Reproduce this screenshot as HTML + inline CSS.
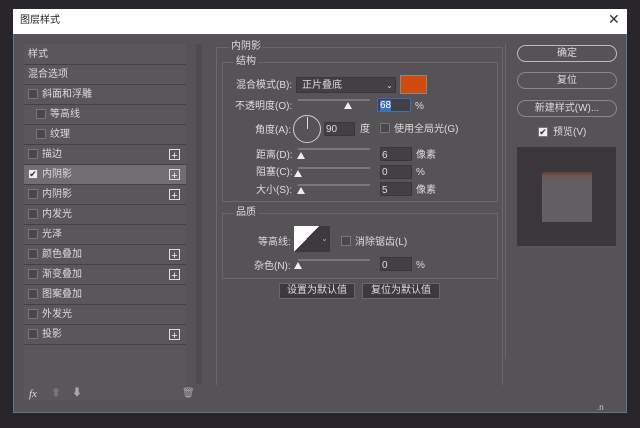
<!DOCTYPE html><html><head><meta charset="utf-8"><style>
body{margin:0;width:640px;height:428px;background:#28262a;position:relative;overflow:hidden;font-family:"Liberation Sans","Noto Sans CJK SC",sans-serif;font-size:10px;color:#ddd}
div,span{position:absolute;box-sizing:border-box}
.t{white-space:nowrap;line-height:12px}
.row{left:24px;width:162px;height:20px;border-bottom:1px solid #444145;background:#5a565b}
.row span{top:4px;line-height:12px}
.cb{width:10px;height:10px;border:1px solid #777;background:#4a474b}
.plus{right:6px;top:4px;width:11px;height:11px;border:1px solid #ddd;color:#eee;font-size:11px;line-height:8px;text-align:center}
.inp{background:#434044;height:14px;border:1px solid #3a373b}
.sl{height:2px;background:#7a777b}
.th{width:0;height:0;border-left:4px solid transparent;border-right:4px solid transparent;border-bottom:7px solid #eee}
.btn{left:517px;width:100px;height:17px;border:1px solid #888;border-radius:9px;text-align:center;line-height:15px;color:#ddd}
</style></head><body>
<div style="left:13px;top:9px;width:614px;height:404px;background:#565257;border:1px solid #5a7896"></div>
<div style="left:13px;top:9px;width:614px;height:25px;background:#fff"></div>
<div class="t" style="left:20px;top:15px;color:#222;font-size:10px">图层样式</div>
<div class="t" style="left:608px;top:13px;color:#333;font-size:14px">✕</div>
<div style="left:24px;top:44px;width:162px;height:356px;background:#5a565b"></div>
<div style="left:196px;top:44px;width:6px;height:340px;background:#4e4b4f"></div>
<div class="row" style="top:45px"><span style="left:4px">样式</span></div>
<div class="row" style="top:65px"><span style="left:4px">混合选项</span></div>
<div class="row" style="top:85px"><span class="cb" style="left:4px;top:4px"></span><span style="left:18px">斜面和浮雕</span></div>
<div class="row" style="top:105px"><span class="cb" style="left:12px;top:4px"></span><span style="left:26px">等高线</span></div>
<div class="row" style="top:125px"><span class="cb" style="left:12px;top:4px"></span><span style="left:26px">纹理</span></div>
<div class="row" style="top:145px"><span class="cb" style="left:4px;top:4px"></span><span style="left:18px">描边</span><span class="plus">+</span></div>
<div class="row" style="top:165px;background:#716d72"><span class="cb" style="left:4px;top:4px;background:#eee;color:#333;font-size:9px;line-height:8px;text-align:center">✔</span><span style="left:18px">内阴影</span><span class="plus">+</span></div>
<div class="row" style="top:185px"><span class="cb" style="left:4px;top:4px"></span><span style="left:18px">内阴影</span><span class="plus">+</span></div>
<div class="row" style="top:205px"><span class="cb" style="left:4px;top:4px"></span><span style="left:18px">内发光</span></div>
<div class="row" style="top:225px"><span class="cb" style="left:4px;top:4px"></span><span style="left:18px">光泽</span></div>
<div class="row" style="top:245px"><span class="cb" style="left:4px;top:4px"></span><span style="left:18px">颜色叠加</span><span class="plus">+</span></div>
<div class="row" style="top:265px"><span class="cb" style="left:4px;top:4px"></span><span style="left:18px">渐变叠加</span><span class="plus">+</span></div>
<div class="row" style="top:285px"><span class="cb" style="left:4px;top:4px"></span><span style="left:18px">图案叠加</span></div>
<div class="row" style="top:305px"><span class="cb" style="left:4px;top:4px"></span><span style="left:18px">外发光</span></div>
<div class="row" style="top:325px"><span class="cb" style="left:4px;top:4px"></span><span style="left:18px">投影</span><span class="plus">+</span></div>
<div class="t" style="left:29px;top:388px;font-style:italic;font-family:'Liberation Serif',serif;font-size:11px">fx</div>
<div class="t" style="left:51px;top:388px;color:#777">⬆</div>
<div class="t" style="left:72px;top:388px;color:#aaa">⬇</div>
<div class="t" style="left:182px;top:388px;color:#aaa">🗑</div>
<!-- middle -->
<div style="left:216px;top:47px;width:287px;height:338px;border:1px solid #6a676b;border-bottom:none"></div>
<div class="t" style="left:229px;top:41px;background:#565257;padding:0 2px">内阴影</div>
<div style="left:222px;top:62px;width:276px;height:140px;border:1px solid #6a676b"></div>
<div class="t" style="left:234px;top:56px;background:#565257;padding:0 2px">结构</div>
<div class="t" style="left:236px;top:80px">混合模式(B):</div>
<div class="inp" style="left:296px;top:77px;width:100px;height:16px"></div>
<div class="t" style="left:302px;top:80px">正片叠底</div>
<div class="t" style="left:386px;top:80px;font-size:8px">⌄</div>
<div style="left:400px;top:75px;width:27px;height:19px;background:#d14a10;border:1px solid #888"></div>
<div class="t" style="left:235px;top:101px">不透明度(O):</div>
<div class="sl" style="left:298px;top:99px;width:72px"></div>
<div class="th" style="left:344px;top:102px"></div>
<div class="inp" style="left:377px;top:98px;width:34px;border-color:#3d6fb0"></div>
<div class="t" style="left:380px;top:100px;background:#3b6fc0;color:#fff">68</div>
<div class="t" style="left:415px;top:101px">%</div>
<div class="t" style="left:255px;top:125px">角度(A):</div>
<div style="left:293px;top:115px;width:28px;height:28px;border:1px solid #ccc;border-radius:50%"></div>
<div style="left:307px;top:117px;width:1px;height:12px;background:#ddd"></div>
<div class="inp" style="left:324px;top:122px;width:31px"></div>
<div class="t" style="left:326px;top:124px">90</div>
<div class="t" style="left:360px;top:124px">度</div>
<div class="cb" style="left:380px;top:123px"></div>
<div class="t" style="left:394px;top:124px">使用全局光(G)</div>
<div class="t" style="left:256px;top:150px">距离(D):</div>
<div class="sl" style="left:298px;top:148px;width:72px"></div><div class="th" style="left:297px;top:152px"></div>
<div class="inp" style="left:380px;top:147px;width:32px"></div><div class="t" style="left:382px;top:150px">6</div><div class="t" style="left:416px;top:150px">像素</div>
<div class="t" style="left:256px;top:167px">阻塞(C):</div>
<div class="sl" style="left:298px;top:167px;width:72px"></div><div class="th" style="left:294px;top:170px"></div>
<div class="inp" style="left:380px;top:165px;width:32px"></div><div class="t" style="left:382px;top:167px">0</div><div class="t" style="left:416px;top:167px">%</div>
<div class="t" style="left:256px;top:185px">大小(S):</div>
<div class="sl" style="left:298px;top:184px;width:72px"></div><div class="th" style="left:297px;top:187px"></div>
<div class="inp" style="left:380px;top:182px;width:32px"></div><div class="t" style="left:382px;top:185px">5</div><div class="t" style="left:416px;top:185px">像素</div>
<div style="left:222px;top:213px;width:276px;height:66px;border:1px solid #6a676b"></div>
<div class="t" style="left:234px;top:207px;background:#565257;padding:0 2px">品质</div>
<div class="t" style="left:258px;top:237px">等高线:</div>
<div style="left:294px;top:226px;width:25px;height:26px;background:linear-gradient(to bottom right,#fff 50%,#3d3a3e 50%)"></div>
<div style="left:319px;top:226px;width:11px;height:26px;background:#3d3a3e;color:#bbb;font-size:8px;text-align:center;line-height:26px">⌄</div>
<div class="cb" style="left:341px;top:236px"></div>
<div class="t" style="left:355px;top:237px">消除锯齿(L)</div>
<div class="t" style="left:254px;top:261px">杂色(N):</div>
<div class="sl" style="left:298px;top:259px;width:72px"></div><div class="th" style="left:294px;top:262px"></div>
<div class="inp" style="left:380px;top:257px;width:32px"></div><div class="t" style="left:382px;top:260px">0</div><div class="t" style="left:416px;top:260px">%</div>
<div style="left:279px;top:283px;width:76px;height:16px;background:#3d3a3e;border:1px solid #6a676b;text-align:center;line-height:13px">设置为默认值</div>
<div style="left:362px;top:283px;width:78px;height:16px;background:#3d3a3e;border:1px solid #6a676b;text-align:center;line-height:13px">复位为默认值</div>
<div style="left:505px;top:44px;width:1px;height:315px;background:#6a676b"></div>
<!-- right -->
<div class="btn" style="top:45px;border-color:#bbb">确定</div>
<div class="btn" style="top:72px">复位</div>
<div class="btn" style="top:100px">新建样式(W)...</div>
<div class="cb" style="left:538px;top:127px;background:#eee;color:#333;font-size:9px;line-height:8px;text-align:center">✔</div>
<div class="t" style="left:553px;top:127px">预览(V)</div>
<div style="left:517px;top:147px;width:99px;height:99px;background:#3a363b"></div>
<div style="left:542px;top:172px;width:50px;height:50px;background:linear-gradient(#6b3528 0,#6a5858 4px,#636064 12px,#636064)"></div>
<div class="t" style="left:597px;top:402px;font-size:8px;color:#ccc">.n</div>
</body></html>
